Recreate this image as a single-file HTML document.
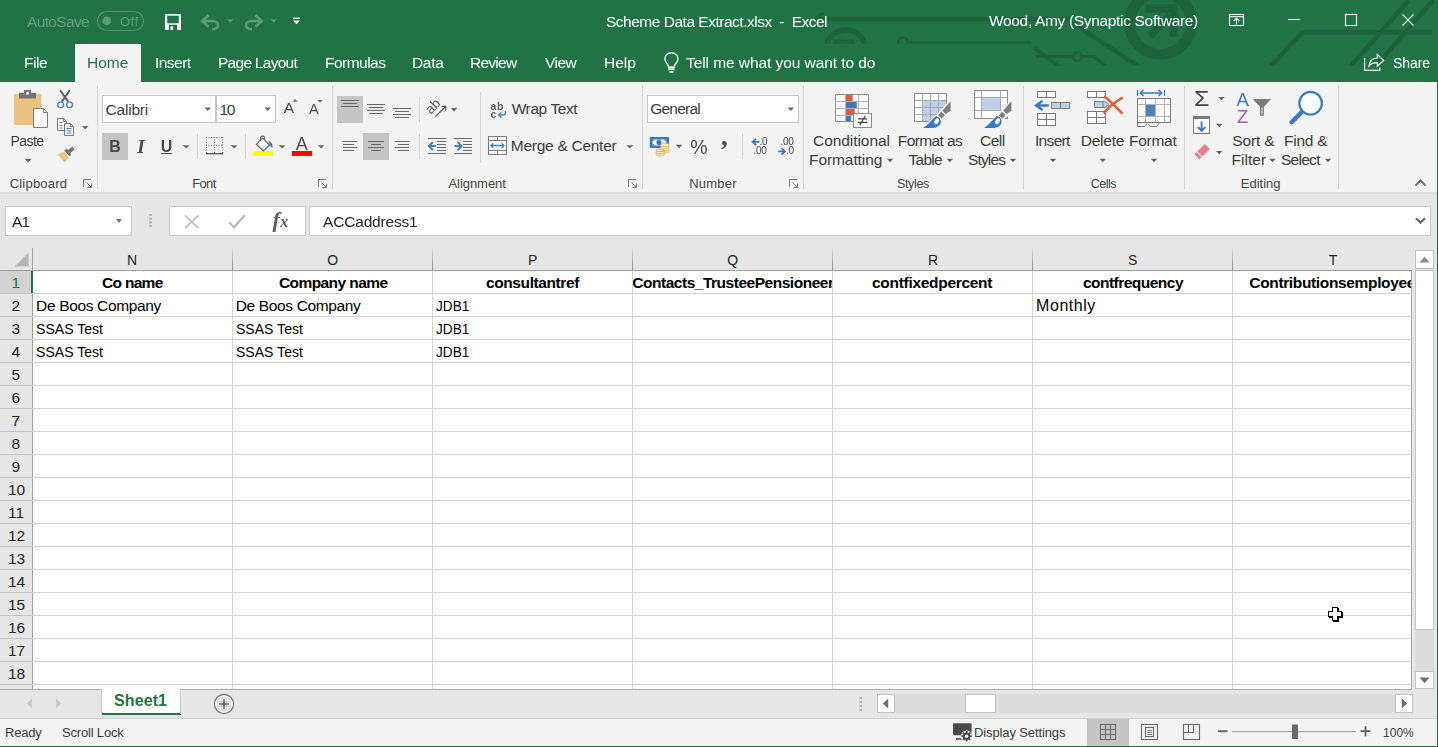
<!DOCTYPE html>
<html lang="en">
<head>
<meta charset="utf-8">
<title>Scheme Data Extract.xlsx - Excel</title>
<style>
html,body{margin:0;padding:0;}
body{width:1438px;height:747px;overflow:hidden;position:relative;background:#e6e6e6;font-family:"Liberation Sans",sans-serif;font-size:15px;color:#262626;}
#app{position:absolute;left:0;top:0;width:1438px;height:747px;overflow:hidden;}
.abs{position:absolute;}
.t{position:absolute;white-space:nowrap;line-height:20px;height:20px;font-size:15.5px;}
.w{color:#fff;will-change:transform;}
svg{position:absolute;overflow:visible;}
/* title + tabs */
#titlebar{left:0;top:0;width:1438px;height:82px;background:#217346;}
#hometab{left:75px;top:44px;width:66px;height:38px;background:#f3f3f3;}
/* ribbon */
#ribbon{left:0;top:82px;width:1438px;height:110px;background:#f3f3f3;}
#ribbonline{left:0;top:192px;width:1438px;height:2px;background:linear-gradient(#e2e2e2,#d6d6d6);}
.vsep{position:absolute;width:1px;background:#d5d5d5;}
.sel{position:absolute;background:#c6c6c6;}
.box{position:absolute;background:#fff;border:1px solid #c6c6c6;box-sizing:border-box;}
.dd{position:absolute;width:0;height:0;border-left:3.5px solid transparent;border-right:3.5px solid transparent;border-top:4px solid #5a5a5a;}
.lbl{color:#444;}
.rb{color:#3c3c3c;}

/* formula bar */
.fbox{position:absolute;background:#fff;border:1px solid #c8c8c8;box-sizing:border-box;top:206px;height:30px;}
/* grid */
#gridbg{left:32px;top:271px;width:1380px;height:418px;background:#fff;}
.hl{position:absolute;left:32px;width:1379px;height:1px;background:#d4d4d4;}
.vl{position:absolute;top:271px;width:1px;height:418px;background:#d4d4d4;}
.chs{position:absolute;top:248px;width:1px;height:22px;background:linear-gradient(#d6d6d6,#8f8f8f);}
.rhl{position:absolute;left:0;width:32px;height:1px;background:#c3c3c3;}
.c{font-size:15.5px;color:#000;}
.cb{font-size:15.5px;color:#000;font-weight:bold;}
.ch{font-size:14px;color:#262626;}
.rh{font-size:15.5px;color:#262626;}
.st{font-size:13px;color:#3b3b3b;}
</style>
</head>
<body>
<div id="app">

<!-- ===== TITLE BAR ===== -->
<div id="titlebar" class="abs"></div>
<div id="hometab" class="abs"></div>
<!-- ===== TITLE BAR PATTERN + ICONS ===== -->
<svg id="titleicons" style="left:0;top:0;" width="1438" height="82" viewBox="0 0 1438 82">
<defs><clipPath id="patclipL"><rect x="0" y="0" width="1031" height="43.800"/></clipPath><clipPath id="patclipR"><rect x="1031" y="0" width="407" height="66"/></clipPath></defs>
<g clip-path="url(#patclipL)" stroke="#1e633d" fill="none" stroke-linecap="butt">
  <path d="M817 19.200 H1040" stroke-width="4.400"/>
  <path d="M816 21 C816 16 820 13.500 824 14" stroke-width="2.500"/>
  <circle cx="845.700" cy="49.600" r="19.750" stroke-width="5.500"/>
  <path d="M833.600 42 H854.500" stroke-width="4.800"/>
  <circle cx="902.900" cy="42.200" r="4.700" stroke-width="2.600"/>
  <path d="M908 42.400 H1031" stroke-width="2.800"/>
</g>
<g clip-path="url(#patclipR)" stroke="#1e633d" fill="none" stroke-linecap="butt">
  <path d="M1020 19.200 H1067 L1139 67" stroke-width="4.400"/>
  <path d="M1034 48 L1060 67" stroke-width="4"/>
  <path d="M1036 56.500 H1073 M1082.500 56.500 H1094 L1107 67" stroke-width="3"/>
  <circle cx="1077.600" cy="56.700" r="4.300" stroke-width="2.600"/>
  <circle cx="1160.500" cy="23.300" r="31" stroke-width="11"/>
  <path d="M1150 36 L1170 15" stroke-width="8"/>
  <path d="M1146 8.400 H1174 V37" stroke-width="8.500"/>
  <path d="M1270 67 L1302.500 32.300 H1432" stroke-width="4.500"/>
  <path d="M1409 0 L1350 67" stroke-width="4.500"/>
  <path d="M1433.500 0 L1375 67" stroke-width="4.500"/>
</g>
<!-- autosave toggle -->
<rect x="97.500" y="11.500" width="46" height="19" rx="9.500" fill="none" stroke="#4f9370" stroke-width="1.200"/>
<circle cx="106.800" cy="20.900" r="4.300" fill="#5c9c79"/>
<!-- save -->
<path d="M165 14 H181 V30 H165 Z M167.200 15.800 V23.200 H178.800 V15.800 Z" fill="#f4f4f4" fill-rule="evenodd"/>
<rect x="169" y="24.800" width="8" height="5.200" fill="#217346"/>
<rect x="170.500" y="26.300" width="2.600" height="3.700" fill="#f4f4f4"/>
<!-- undo -->
<g stroke="#5c9c79" fill="none" stroke-width="2.700">
<path d="M208.500 15.200 L202.500 21 L208.500 26.800"/>
<path d="M203 21 H212.500 C220 21 220 29 212 29.200"/>
<!-- redo -->
<path d="M255.500 15.200 L261.500 21 L255.500 26.800"/>
<path d="M261 21 H251.500 C244 21 244 29 252 29.200"/>
</g>
<path d="M227 19.200 H233.400 L230.200 22.600 Z" fill="#5c9c79"/>
<path d="M270.500 19.200 H276.900 L273.700 22.600 Z" fill="#5c9c79"/>
<!-- customize QAT -->
<rect x="293.300" y="17.600" width="6.400" height="1.400" fill="#fff"/>
<path d="M293 20.600 H300 L296.500 24.200 Z" fill="#fff"/>
<!-- window controls -->
<g stroke="#fff" fill="none" stroke-width="1.100">
<rect x="1229.500" y="14.500" width="14" height="11"/>
<path d="M1229.500 16.700 H1243.500"/>
<path d="M1236.500 24.500 V18.500 M1233.700 21 L1236.500 18.300 L1239.300 21"/>
<path d="M1288 19.500 H1300"/>
<rect x="1345.500" y="14.500" width="11" height="11"/>
<path d="M1402.200 14.200 L1413.800 25.800 M1413.800 14.200 L1402.200 25.800"/>
</g>
<!-- tell me bulb -->
<g stroke="#f1f6f3" fill="none" stroke-width="1.400" transform="translate(0 0.7)">
<path d="M668.600 66.300 C668.600 63.500 664.800 61.800 664.800 58.300 C664.800 54.600 667.800 52 671.400 52 C675 52 678 54.600 678 58.300 C678 61.800 674.200 63.500 674.200 66.300 Z"/>
<path d="M668.600 68.500 H674.200 M669.400 71.300 H673.400"/>
</g>
<rect x="668.300" y="67" width="6.200" height="3.300" fill="#e8f0eb" opacity="0.850"/>
<!-- share -->
<g stroke="#fff" fill="none" stroke-width="1.200">
<path d="M1364.600 58 V70.400 H1379.800 V67.600"/>
<path d="M1369 66 C1369.500 61 1372.500 58.200 1377.300 58 V54.600 L1383.600 60.400 L1377.300 66.200 V62.700 C1373.500 62.600 1370.800 63.600 1369 66 Z"/>
</g>
</svg>

<span class="t" id="t_autosave" style="left:27.00px;top:12px;font-size:15.5px;color:#649d7d;letter-spacing:-0.65px;will-change:transform;">AutoSave</span>
<span class="t" id="t_off" style="left:119.5px;top:12px;font-size:13px;color:#5c9c79;letter-spacing:0.45px;will-change:transform;">Off</span>
<span class="t w" id="t_title" style="left:606.10px;top:12px;font-size:15.5px;letter-spacing:-0.49px;">Scheme Data Extract.xlsx&nbsp; -&nbsp; Excel</span>
<span class="t w" id="t_user" style="left:989.00px;top:11px;font-size:15.5px;letter-spacing:-0.33px;">Wood, Amy (Synaptic Software)</span>

<span class="t w" id="t_file" style="left:23.53px;top:53px;letter-spacing:-0.45px;">File</span>
<span class="t" id="t_home" style="left:86.70px;top:53px;color:#217346;letter-spacing:0.00px;will-change:transform;">Home</span>
<span class="t w" id="t_insert" style="left:154.70px;top:53px;letter-spacing:-0.54px;">Insert</span>
<span class="t w" id="t_pagelayout" style="left:217.70px;top:53px;letter-spacing:-0.73px;">Page Layout</span>
<span class="t w" id="t_formulas" style="left:324.70px;top:53px;letter-spacing:-0.52px;">Formulas</span>
<span class="t w" id="t_data" style="left:411.70px;top:53px;letter-spacing:-0.32px;">Data</span>
<span class="t w" id="t_review" style="left:470.48px;top:53px;letter-spacing:-0.73px;">Review</span>
<span class="t w" id="t_view" style="left:544.65px;top:53px;letter-spacing:-0.54px;">View</span>
<span class="t w" id="t_help" style="left:603.70px;top:53px;letter-spacing:0.03px;">Help</span>
<span class="t w" id="t_tellme" style="left:685.60px;top:53px;letter-spacing:-0.07px;">Tell me what you want to do</span>
<span class="t w" id="t_share" style="left:1392.96px;top:53px;font-size:14px;letter-spacing:-0.08px;">Share</span>

<!-- ===== RIBBON ===== -->
<div id="ribbon" class="abs"></div>
<div id="ribbonline" class="abs"></div>

<!-- group separators -->
<div class="vsep" style="left:97px;top:86px;height:103px;"></div>
<div class="vsep" style="left:332px;top:86px;height:103px;"></div>
<div class="vsep" style="left:642px;top:86px;height:103px;"></div>
<div class="vsep" style="left:803px;top:86px;height:103px;"></div>
<div class="vsep" style="left:1023px;top:86px;height:103px;"></div>
<div class="vsep" style="left:1184px;top:86px;height:103px;"></div>
<div class="vsep" style="left:1338px;top:86px;height:103px;"></div>
<!-- small separators -->
<div class="vsep" style="left:197px;top:134px;height:25px;"></div>
<div class="vsep" style="left:245px;top:134px;height:25px;"></div>
<div class="vsep" style="left:419px;top:97px;height:25px;"></div>
<div class="vsep" style="left:419px;top:134px;height:25px;"></div>
<div class="vsep" style="left:480px;top:92px;height:71px;"></div>
<div class="vsep" style="left:742px;top:134px;height:25px;"></div>

<!-- selected button backgrounds -->
<div class="sel" style="left:102px;top:133px;width:26px;height:27px;"></div>
<div class="sel" style="left:337px;top:96px;width:26px;height:27px;"></div>
<div class="sel" style="left:363px;top:133px;width:26px;height:27px;"></div>

<!-- combo boxes -->
<div class="box" style="left:102px;top:95px;width:114px;height:28px;"></div>
<div class="box" style="left:216px;top:95px;width:60px;height:28px;"></div>
<div class="box" style="left:647px;top:95px;width:152px;height:28px;"></div>
<span class="t rb" id="t_calibri" style="left:105.5px;top:100px;font-size:15.5px;letter-spacing:-0.2px;">Calibri</span>
<span class="t rb" id="t_10" style="left:219.4px;top:100px;font-size:15.5px;letter-spacing:-1.2px;">10</span>
<span class="t rb" id="t_general" style="top:99px;left:650.3px;letter-spacing:-0.8px;font-size:15.5px;">General</span>

<!-- group labels -->
<span class="t lbl" id="t_clipboard" style="left:9.68px;top:174px;font-size:13px;letter-spacing:0.21px;">Clipboard</span>
<span class="t lbl" id="t_font" style="left:192.14px;top:174px;font-size:13px;letter-spacing:-0.60px;">Font</span>
<span class="t lbl" id="t_alignment" style="left:448.50px;top:174px;font-size:13px;letter-spacing:-0.06px;">Alignment</span>
<span class="t lbl" id="t_number" style="left:689.14px;top:174px;font-size:13px;letter-spacing:0.24px;">Number</span>
<span class="t lbl" id="t_styles" style="left:897.00px;top:174px;font-size:12.5px;letter-spacing:-0.36px;">Styles</span>
<span class="t lbl" id="t_cells" style="left:1090.64px;top:174px;font-size:12.5px;letter-spacing:-0.48px;">Cells</span>
<span class="t lbl" id="t_editing" style="left:1240.78px;top:174px;font-size:13px;letter-spacing:0.00px;">Editing</span>

<!-- button labels -->
<span class="t rb" id="t_paste" style="left:10.60px;top:131px;font-size:14px;letter-spacing:-0.57px;">Paste</span>
<span class="t rb" id="t_wrap" style="left:511.68px;top:99px;letter-spacing:-0.40px;">Wrap Text</span>
<span class="t rb" id="t_merge" style="left:510.78px;top:136px;letter-spacing:-0.27px;">Merge &amp; Center</span>
<span class="t rb" id="t_cond" style="left:813.00px;top:131px;letter-spacing:-0.06px;">Conditional</span>
<span class="t rb" id="t_formatting" style="left:809.10px;top:150px;letter-spacing:-0.10px;">Formatting</span>
<span class="t rb" id="t_formatas" style="left:897.78px;top:131px;letter-spacing:-0.60px;">Format as</span>
<span class="t rb" id="t_table" style="left:908.50px;top:150px;letter-spacing:-0.72px;">Table</span>
<span class="t rb" id="t_cell" style="left:980.00px;top:131px;letter-spacing:-0.48px;">Cell</span>
<span class="t rb" id="t_styles2" style="left:967.96px;top:150px;letter-spacing:-0.84px;">Styles</span>
<span class="t rb" id="t_insertb" style="left:1034.96px;top:131px;letter-spacing:-0.66px;">Insert</span>
<span class="t rb" id="t_delete" style="left:1080.78px;top:131px;letter-spacing:-0.24px;">Delete</span>
<span class="t rb" id="t_format" style="left:1129.10px;top:131px;letter-spacing:-0.30px;">Format</span>
<span class="t rb" id="t_sort" style="left:1232.32px;top:131px;letter-spacing:-0.18px;">Sort &amp;</span>
<span class="t rb" id="t_filter" style="left:1231.42px;top:150px;letter-spacing:0.06px;">Filter</span>
<span class="t rb" id="t_find" style="left:1283.96px;top:131px;letter-spacing:-0.24px;">Find &amp;</span>
<span class="t rb" id="t_select" style="left:1280.96px;top:150px;letter-spacing:-0.72px;">Select</span>

<!-- ===== RIBBON ICONS (page coordinates) ===== -->
<svg id="ribbonicons" style="left:0;top:0;" width="1438" height="200" viewBox="0 0 1438 200">
<!-- dropdown arrows -->
<g fill="#666">
<path d="M24.800 158.800 H31.600 L28.200 162.400 Z"/>
<path d="M82 126 H88.400 L85.200 129.400 Z"/>
<path d="M204.500 107.600 H211 L207.750 111 Z"/>
<path d="M264.500 107.600 H271 L267.750 111 Z"/>
<path d="M182.800 145.200 H189.300 L186.050 148.600 Z"/>
<path d="M230.800 145.200 H237.300 L234.050 148.600 Z"/>
<path d="M278.800 145.200 H285.300 L282.050 148.600 Z"/>
<path d="M317.800 145.200 H324.300 L321.050 148.600 Z"/>
<path d="M450.800 108 H457.300 L454.050 111.400 Z"/>
<path d="M626.600 145.200 H633.100 L629.850 148.600 Z"/>
<path d="M787.600 107.600 H794.100 L790.850 111 Z"/>
<path d="M675.800 144.800 H682.300 L679.050 148.200 Z"/>
<path d="M886.800 158.800 H893.300 L890.050 162.200 Z"/>
<path d="M946.600 158.800 H953.100 L949.850 162.200 Z"/>
<path d="M1009.800 158.800 H1016.300 L1013.050 162.200 Z"/>
<path d="M1049.800 158.800 H1056.300 L1053.050 162.200 Z"/>
<path d="M1099.500 158.800 H1106 L1102.750 162.200 Z"/>
<path d="M1150.800 158.800 H1157.300 L1154.050 162.200 Z"/>
<path d="M1218.200 96.900 H1224.700 L1221.450 100.300 Z"/>
<path d="M1216 123.800 H1222.500 L1219.250 127.200 Z"/>
<path d="M1216 151.100 H1222.500 L1219.250 154.500 Z"/>
<path d="M1269.200 158.800 H1275.700 L1272.450 162.200 Z"/>
<path d="M1324.800 158.800 H1331.300 L1328.050 162.200 Z"/>
</g>
<!-- dialog launchers -->
<g stroke="#777" fill="none" stroke-width="1">
<path d="M83.500 187 V179.500 H91"/><path d="M86.500 182.500 L91.500 187.500 M91.500 183.500 V187.500 H87.500"/>
<path d="M318.500 187 V179.500 H326"/><path d="M321.500 182.500 L326.500 187.500 M326.500 183.500 V187.500 H322.500"/>
<path d="M628.500 187 V179.500 H636"/><path d="M631.500 182.500 L636.500 187.500 M636.500 183.500 V187.500 H632.500"/>
<path d="M789.500 187 V179.500 H797"/><path d="M792.500 182.500 L797.500 187.500 M797.500 183.500 V187.500 H793.500"/>
</g>
<!-- collapse ribbon caret -->
<path d="M1415.500 185.600 L1420.500 180.400 L1425.500 185.600" stroke="#6e6e6e" stroke-width="1.900" fill="none"/>

<!-- PASTE -->
<rect x="14" y="93.800" width="27.200" height="31.200" rx="1.500" fill="#eac282"/>
<path d="M19 92.800 H24 V90 H31 V92.800 H36 V98.400 H19 Z" fill="#737373"/>
<rect x="26.300" y="91.800" width="2.600" height="2.800" fill="#f3f3f3"/>
<path d="M33.500 108.500 H43.500 L47.500 112.500 V127.500 H33.500 Z" fill="#fff" stroke="#7a7a7a" stroke-width="1"/>
<path d="M43.500 108.500 V112.500 H47.500" fill="none" stroke="#7a7a7a" stroke-width="1"/>
<!-- CUT -->
<path d="M60.200 90.400 L68.200 101.600 M69.800 90.400 L61.800 101.600" stroke="#5e5e5e" stroke-width="1.900" fill="none"/>
<circle cx="60.700" cy="104.700" r="2.900" fill="none" stroke="#3e7fc4" stroke-width="1.300"/>
<circle cx="69.500" cy="104.700" r="2.900" fill="none" stroke="#3e7fc4" stroke-width="1.300"/>
<!-- COPY -->
<path d="M57.500 118.500 H63.500 L66.500 121.500 V130.500 H57.500 Z" fill="#fff" stroke="#7a7a7a"/>
<path d="M63.500 118.500 V121.500 H66.500" fill="none" stroke="#7a7a7a"/>
<path d="M59.500 122.500 H62.500 M59.500 125.500 H62.500 M59.500 128 H62.500" stroke="#3e7fc4" stroke-width="1"/>
<path d="M64.500 123.500 H70.500 L73.500 126.500 V135.500 H64.500 Z" fill="#fff" stroke="#7a7a7a"/>
<path d="M70.500 123.500 V126.500 H73.500" fill="none" stroke="#7a7a7a"/>
<path d="M66.500 128.500 H71.500 M66.500 130.800 H71.500 M66.500 133.100 H71.500" stroke="#3e7fc4" stroke-width="1"/>
<!-- FORMAT PAINTER -->
<path d="M57.500 154.400 L64.400 151.600 L69.200 157.600 L64.400 162.400 Z" fill="#eac282"/>
<path d="M64.200 150.600 L66.800 148.600 L71.200 154.600 L69.600 156.600 Z" fill="#737373"/>
<path d="M67.800 150.200 L72.400 146.800 L74.600 149.600 L70 153.200 Z" fill="#737373"/>

<!-- FONT GROUP: grow / shrink -->
<path d="M292.400 101.800 L295.100 99 L297.800 101.800 Z" fill="#3e7fc4"/>
<path d="M317.300 100 H322.900 L320.100 102.800 Z" fill="#3e7fc4"/>
<!-- underline bar for U -->
<rect x="160.800" y="153" width="11.200" height="1" fill="#4a4a4a"/>
<!-- borders icon -->
<g stroke="#6a6a6a" stroke-width="1" stroke-dasharray="1 1.500" fill="none">
<path d="M206 137.500 H223.200 M206.500 137 V153 M222.700 137 V153 M214.600 137 V153 M206 145.300 H223.200"/>
</g>
<path d="M205.800 153.700 H223.400" stroke="#5e5e5e" stroke-width="1.400"/>
<!-- fill color -->
<rect x="253" y="151" width="20.200" height="4.900" fill="#ffff00"/>
<path d="M256.300 144.300 L262.600 138 L269.600 145 L263.300 150.900 Z" fill="#fff" stroke="#5e5e5e" stroke-width="1.200"/>
<path d="M260.600 141.300 V137.800 C260.600 135.600 264.600 135.600 264.600 137.800 V140" fill="none" stroke="#5e5e5e" stroke-width="1.100"/>
<path d="M268.400 140.600 C271.400 141.600 273 144.600 272.500 148 C271 146.800 270 145.800 269.700 144.900 Z" fill="#3e7fc4"/>
<!-- font color -->
<rect x="291.900" y="151" width="20.200" height="4.900" fill="#ff0000"/>

<!-- ALIGNMENT -->
<g stroke="#666" stroke-width="1" fill="none" shape-rendering="crispEdges">
<path d="M341 100.500 H359 M343 103.500 H357 M341 106.500 H359"/>
<path d="M367 104.500 H385 M369 107.500 H383 M367 110.500 H385 M369 113.500 H383"/>
<path d="M393 108.500 H411 M395 111.500 H409 M393 114.500 H411 M395 117.500 H409"/>
<path d="M343 141.500 H357 M343 144.500 H354 M343 147.500 H357 M343 150.500 H354"/>
<path d="M368 141.500 H384 M371 144.500 H381 M368 147.500 H384 M371 150.500 H381"/>
<path d="M395 141.500 H409 M398 144.500 H409 M395 147.500 H409 M398 150.500 H409"/>
<!-- indent icons -->
<path d="M428 138.500 H446 M437 141.500 H446 M437 144.500 H446 M437 147.500 H446 M437 150.500 H446 M428 153.500 H446"/>
<path d="M454 138.500 H472 M463 141.500 H472 M463 144.500 H472 M463 147.500 H472 M463 150.500 H472 M454 153.500 H472"/>
</g>
<g stroke="#3e7fc4" stroke-width="2" fill="none">
<path d="M429 146.100 H436 M432.800 142.200 L428.900 146.100 L432.800 150"/>
<path d="M454.500 146.100 H461.500 M457.700 142.200 L461.600 146.100 L457.700 150"/>
</g>
<!-- orientation arrow -->
<path d="M435.300 116.600 L445.600 106.500 M441.600 106.400 H445.800 V110.500" stroke="#5e5e5e" stroke-width="1.300" fill="none"/>
<!-- wrap text arrow -->
<path d="M505.300 111.300 V113.300 C505.300 114.600 504.600 115 503.400 115 H499" stroke="#3e7fc4" stroke-width="1.300" fill="none"/>
<path d="M501.300 112.400 L498.600 115 L501.300 117.600" stroke="#3e7fc4" stroke-width="1.300" fill="none"/>
<!-- merge & center -->
<rect x="488.500" y="136.500" width="18" height="18" fill="#fff" stroke="#7a7a7a"/>
<path d="M488.500 140.500 H506.500 M488.500 150.500 H506.500 M497.500 136.500 V140.500 M497.500 150.500 V154.500" stroke="#7a7a7a" fill="none"/>
<path d="M491 145.500 H504 M493.300 143.200 L491 145.500 L493.300 147.800 M501.700 143.200 L504 145.500 L501.700 147.800" stroke="#3e7fc4" stroke-width="1.300" fill="none"/>
<!-- NUMBER: accounting -->
<rect x="649.800" y="137" width="19.200" height="11" rx="1" fill="#3b76bf"/>
<rect x="652.400" y="139.500" width="14" height="6" fill="#fff"/>
<ellipse cx="659" cy="142.500" rx="2.600" ry="2.800" fill="#3b76bf"/>
<path d="M652.400 139.500 H654.800 L652.400 141.900 Z M666.400 145.500 H664 L666.400 143.100 Z M652.400 145.500 V143.100 L654.800 145.500 Z M666.400 139.500 V141.900 L664 139.500 Z" fill="#3b76bf"/>
<g fill="#f3f3f3" stroke="#e3b565" stroke-width="1">
<rect x="660.900" y="143.700" width="8" height="9.200" rx="1.500"/>
<rect x="656.200" y="149.300" width="8" height="6.400" rx="1.500"/>
</g>
<path d="M661.300 146.500 H668.500 M661.300 148.700 H668.500 M661.300 150.900 H668.500 M656.600 151.600 H663.800 M656.600 153.600 H663.800" stroke="#e3b565" stroke-width="1.100" fill="none"/>
<!-- increase / decrease decimal arrows -->
<g stroke="#3b76bf" stroke-width="1.800" fill="none">
<path d="M752.800 141.800 H759.400 M756 138.600 L752.700 141.800 L756 145"/>
<path d="M778.200 151.400 H784.800 M781.600 148.200 L784.900 151.400 L781.600 154.600"/>
</g>
<!-- CONDITIONAL FORMATTING -->
<rect x="835.500" y="94.500" width="33" height="27" fill="#fff" stroke="#8a8a8a"/>
<path d="M845.500 94.500 V121.500 M858.500 94.500 V121.500 M835.500 101.500 H868.500 M835.500 108.500 H868.500 M835.500 115.500 H868.500" stroke="#b4b4b4" fill="none"/>
<rect x="846" y="95" width="6.700" height="6" fill="#d9603b"/>
<rect x="846" y="102" width="10.800" height="6" fill="#3b78c4"/>
<rect x="846" y="109" width="8.800" height="6" fill="#d9603b"/>
<rect x="846" y="116" width="5" height="5" fill="#3b78c4"/>
<rect x="853.500" y="113.500" width="18" height="14" fill="#fff" stroke="#8a8a8a"/>
<path d="M858 118.800 H867 M858 122.400 H867 M865.200 115.800 L859.800 125.400" stroke="#444" stroke-width="1.200" fill="none"/>
<!-- FORMAT AS TABLE -->
<rect x="914.500" y="93.500" width="32" height="28" fill="#fff" stroke="#8a8a8a"/>
<rect x="922.500" y="100.500" width="24" height="21" fill="#bdd0e9"/>
<path d="M922.500 93.500 V121.500 M930.500 93.500 V121.500 M938.500 93.500 V121.500 M914.500 100.500 H946.500 M914.500 107.500 H946.500 M914.500 114.500 H946.500" stroke="#a8a8a8" fill="none"/>
<rect x="914.500" y="93.500" width="32" height="28" fill="none" stroke="#8a8a8a"/>
<path d="M948 104 V123 H929.500 Z" fill="#f3f3f3"/>
<g id="brushA">
<path d="M951.100 100.200 L951.100 110.700 L941.600 119.600 L937.200 115.400 Z" fill="none" stroke="#f3f3f3" stroke-width="2"/>
<path d="M950.600 101.200 L950.600 110.400 L945.900 113.900 L942.300 110.700 Z" fill="#7f7f7f"/>
<path d="M941.200 111.800 L945 115.100 L941.500 118.600 L938 115.400 Z" fill="#7f7f7f"/>
<path d="M923.200 127.900 C928.500 124.500 931.500 120.300 935.600 116.300 C938.800 116.300 940.900 118.800 940.900 121.800 C940.300 125.800 936.800 127.900 933 127.900 Z" fill="#3b78c4" stroke="#f3f3f3" stroke-width="2.200" paint-order="stroke"/>
<ellipse cx="936.700" cy="121.300" rx="2.100" ry="3.100" transform="rotate(30 936.700 121.300)" fill="#fff"/>
</g>
<!-- CELL STYLES -->
<rect x="974.500" y="90.500" width="33" height="28" fill="#fff" stroke="#8a8a8a"/>
<rect x="982" y="98" width="18" height="12" fill="#bdd0e9"/>
<path d="M981.500 90.500 V118.500 M1000.500 90.500 V118.500 M974.500 97.500 H1007.500 M974.500 110.500 H1007.500" stroke="#a8a8a8" fill="none"/>
<rect x="974.500" y="90.500" width="33" height="28" fill="none" stroke="#8a8a8a"/>
<g id="brushB" transform="translate(60.800 0)">
<path d="M951.100 100.200 L951.100 110.700 L941.600 119.600 L937.200 115.400 Z" fill="none" stroke="#f3f3f3" stroke-width="2"/>
<path d="M950.600 101.200 L950.600 110.400 L945.900 113.900 L942.300 110.700 Z" fill="#7f7f7f"/>
<path d="M941.200 111.800 L945 115.100 L941.500 118.600 L938 115.400 Z" fill="#7f7f7f"/>
<path d="M923.200 127.900 C928.500 124.500 931.500 120.300 935.600 116.300 C938.800 116.300 940.900 118.800 940.900 121.800 C940.300 125.800 936.800 127.900 933 127.900 Z" fill="#3b78c4" stroke="#f3f3f3" stroke-width="2.200" paint-order="stroke"/>
<ellipse cx="936.700" cy="121.300" rx="2.100" ry="3.100" transform="rotate(30 936.700 121.300)" fill="#fff"/>
</g>
<!-- INSERT -->
<g fill="#fff" stroke="#7a7a7a">
<rect x="1037.500" y="91.500" width="18" height="6"/>
<rect x="1037.500" y="113.500" width="18" height="12"/>
</g>
<path d="M1046.500 91.500 V97.500 M1046.500 113.500 V125.500 M1037.500 119.500 H1055.500" stroke="#7a7a7a" fill="none"/>
<rect x="1051.500" y="102.500" width="18" height="6" fill="#bdd0e9" stroke="#7a7a7a"/>
<path d="M1060.500 102.500 V108.500" stroke="#7a7a7a"/>
<path d="M1034 105.500 L1041.800 100 L1043.200 101.800 L1040 104.200 H1048.800 V106.800 H1040 L1043.200 109.200 L1041.800 111 Z" fill="#3b78c4"/>
<!-- DELETE -->
<g fill="#fff" stroke="#7a7a7a">
<rect x="1087.500" y="91.500" width="18" height="6"/>
<rect x="1087.500" y="111.500" width="18" height="12"/>
</g>
<path d="M1096.500 91.500 V97.500 M1096.500 111.500 V123.500 M1087.500 117.500 H1105.500" stroke="#7a7a7a" fill="none"/>
<path d="M1094.500 101.500 H1105 L1109 104.600 L1105 107.500 H1094.500 Z" fill="#bdd0e9" stroke="#7a7a7a"/>
<path d="M1103 101.500 V107.500" stroke="#7a7a7a"/>
<path d="M1105 97 C1110 101 1116 107 1121.800 112.800 M1121.800 98.200 C1115 102 1109 107 1104.400 112.600" stroke="#d9603b" stroke-width="2.600" fill="none" stroke-linecap="round"/>
<!-- FORMAT -->
<path d="M1137.500 90 V96 M1164.500 90 V96" stroke="#3b78c4" stroke-width="1.200"/>
<path d="M1140.500 93 H1161.500 M1143.500 90 L1140.300 93 L1143.500 96 M1158.500 90 L1161.700 93 L1158.500 96" stroke="#3b78c4" stroke-width="1.500" fill="none"/>
<rect x="1137.500" y="98.500" width="33" height="24" fill="#fff" stroke="#7a7a7a"/>
<path d="M1145.500 98.500 V122.500 M1155.500 98.500 V122.500 M1164.500 98.500 V122.500 M1137.500 104.500 H1170.500 M1137.500 116.500 H1170.500" stroke="#b4b4b4" fill="none"/>
<rect x="1146" y="105" width="9" height="11" fill="#4a82bd"/>
<rect x="1137.500" y="98.500" width="33" height="24" fill="none" stroke="#7a7a7a"/>
<path d="M1137.500 122.500 V126.500 H1145 L1147 124 M1148.500 124 L1150 126.500 H1157 L1159.500 122.500" stroke="#7a7a7a" fill="none"/>
<!-- EDITING: fill down -->
<rect x="1193.500" y="116.500" width="16" height="17" fill="#fff" stroke="#7a7a7a"/>
<rect x="1193" y="116" width="17" height="3" fill="#7a7a7a"/>
<path d="M1201.600 121.500 V130.500 M1197.800 127 L1201.600 130.800 L1205.400 127" stroke="#3b78c4" stroke-width="1.900" fill="none"/>
<!-- eraser -->
<path d="M1194.300 153.900 L1204.900 144.100 L1209.900 148.900 L1199.300 159.600 Z" fill="#e8818f"/>
<path d="M1196.800 151.600 L1201.800 156.900" stroke="#f3f3f3" stroke-width="1.100"/>
<!-- funnel -->
<path d="M1252.700 99 H1271.100 L1263.900 106.800 V115.800 H1260 V106.800 Z" fill="#7a7a7a"/>
<path d="M1262 107.500 V114.600" stroke="#f3f3f3" stroke-width="1"/>
<!-- magnifier -->
<path d="M1301.700 112.100 L1291.600 122.200" stroke="#3b78c4" stroke-width="4.400" stroke-linecap="round"/>
<circle cx="1310.600" cy="103.200" r="11.300" fill="#fff" stroke="#3b78c4" stroke-width="2.200"/>

</svg>
<!-- icon glyph text -->
<span class="t" id="i_B" style="left:109.300px;top:137px;font-size:16px;font-weight:bold;color:#4a4a4a;">B</span>
<span class="t" id="i_I" style="left:137.200px;top:136.500px;font-size:19px;font-weight:bold;font-style:italic;font-family:'Liberation Serif',serif;color:#4a4a4a;">I</span>
<span class="t" id="i_U" style="left:160.800px;top:137px;font-size:16px;font-weight:bold;color:#4a4a4a;">U</span>
<span class="t" id="i_Abig" style="left:283.800px;top:98px;font-size:15.500px;color:#4a4a4a;">A</span>
<span class="t" id="i_Asmall" style="left:309px;top:98.500px;font-size:14.500px;color:#4a4a4a;">A</span>
<span class="t" id="i_Acolor" style="left:295.800px;top:133.500px;font-size:18px;color:#4a4a4a;">A</span>
<span class="t" id="i_ab" style="left:434.8px;top:99px;font-size:13.5px;color:#555;transform:rotate(-45deg);transform-origin:0 20px;">ab</span>
<span class="t" id="i_wrapab" style="left:490.500px;top:95.500px;letter-spacing:0.7px;font-size:10.500px;font-weight:bold;color:#5e5e5e;">ab</span>
<span class="t" id="i_pct" style="left:690.300px;top:136.500px;font-size:19.500px;color:#4a4a4a;">%</span>
<span class="t" id="i_comma" style="left:721px;top:126px;font-size:27px;font-weight:bold;font-family:'Liberation Serif',serif;color:#4a4a4a;">,</span>
<span class="t" id="i_dec1a" style="left:759.500px;top:131.500px;font-size:10px;color:#4a4a4a;letter-spacing:-0.300px;">.0</span>
<span class="t" id="i_dec1b" style="left:753.500px;top:140.500px;font-size:10px;color:#4a4a4a;letter-spacing:-0.300px;">.00</span>
<span class="t" id="i_dec2a" style="left:780.500px;top:131.500px;font-size:10px;color:#4a4a4a;letter-spacing:-0.300px;">.00</span>
<span class="t" id="i_dec2b" style="left:786px;top:140.500px;font-size:10px;color:#4a4a4a;letter-spacing:-0.300px;">.0</span>
<span class="t" id="i_sigma" style="left:1193.600px;top:85.500px;font-size:22px;line-height:26px;height:26px;color:#444;transform:scaleX(1.130);transform-origin:0 0;">&Sigma;</span>
<span class="t" id="i_sortA" style="left:1236.600px;top:88px;font-size:18.500px;line-height:24px;height:24px;color:#3b78c4;">A</span>
<span class="t" id="i_sortZ" style="left:1237px;top:105px;font-size:18.500px;line-height:24px;height:24px;color:#a259c2;">Z</span>
<span class="t" id="i_wrapc" style="left:490.500px;top:103.500px;font-size:10.500px;font-weight:bold;color:#5e5e5e;">c</span>


<!-- ===== FORMULA BAR ===== -->
<div class="fbox" style="left:5px;width:127px;"></div>
<div class="fbox" style="left:169px;width:137px;"></div>
<div class="fbox" style="left:309px;width:1122px;"></div>
<span class="t" id="t_a1" style="left:12.00px;top:212px;color:#262626;letter-spacing:-0.90px;">A1</span>
<div class="dd" style="left:116px;top:219px;border-top-color:#777;"></div>
<svg style="left:148px;top:213px;" width="6" height="14" viewBox="0 0 6 14"><g fill="#b4b4b4"><rect x="1" y="1" width="3" height="2"/><rect x="1" y="4.7" width="3" height="2"/><rect x="1" y="8.4" width="3" height="2"/><rect x="1" y="12" width="3" height="2"/></g></svg>
<svg style="left:184px;top:214px;" width="16" height="15" viewBox="0 0 16 15"><path d="M1 1.5 L14.5 14 M14.5 1.5 L1 14" stroke="#b8b8b8" stroke-width="1.7" fill="none"/></svg>
<svg style="left:228px;top:214px;" width="18" height="15" viewBox="0 0 18 15"><path d="M1.2 8.2 L6 13.3 L16.8 1.2" stroke="#b8b8b8" stroke-width="2.2" fill="none"/></svg>
<span class="t" id="t_fx" style="left:272.5px;top:208px;font-family:'Liberation Serif',serif;font-style:italic;font-size:22px;line-height:24px;height:24px;color:#5e5e5e;font-weight:bold;letter-spacing:0.5px;">f<span style="font-size:16px;">x</span></span>
<span class="t c" id="t_formula" style="left:323.00px;top:212px;color:#262626;letter-spacing:-0.18px;">ACCaddress1</span>
<svg style="left:1415px;top:217px;" width="11" height="8" viewBox="0 0 11 8"><path d="M1 1.2 L5.5 5.8 L10 1.2" stroke="#6a6a6a" stroke-width="2.2" fill="none"/></svg>


<!-- ===== GRID ===== -->
<div id="gridbg" class="abs"></div>
<svg style="left:14.3px;top:252px;" width="15" height="15" viewBox="0 0 15 15"><path d="M14.5 0.5 L14.5 14.5 L0.5 14.5 Z" fill="#b7b7b7"/></svg>
<div class="abs" style="left:0;top:270px;width:1412px;height:1px;background:#9f9f9f;"></div>
<div class="abs" style="left:32px;top:248px;width:1px;height:441px;background:#9f9f9f;"></div>
<div class="abs" style="left:1411px;top:271px;width:1px;height:418px;background:#a6a6a6;"></div>
<div class="abs" style="left:0;top:271px;width:31px;height:22px;background:#d2d2d2;"></div>
<div class="abs" style="left:31px;top:271px;width:2px;height:23px;background:#217346;"></div>
<div class="vl" style="left:232px;"></div>
<div class="chs" style="left:232px;"></div>
<div class="vl" style="left:432px;"></div>
<div class="chs" style="left:432px;"></div>
<div class="vl" style="left:632px;"></div>
<div class="chs" style="left:632px;"></div>
<div class="vl" style="left:832px;"></div>
<div class="chs" style="left:832px;"></div>
<div class="vl" style="left:1032px;"></div>
<div class="chs" style="left:1032px;"></div>
<div class="vl" style="left:1232px;"></div>
<div class="chs" style="left:1232px;"></div>
<div class="hl" style="top:293px;"></div>
<div class="rhl" style="top:293px;"></div>
<div class="hl" style="top:316px;"></div>
<div class="rhl" style="top:316px;"></div>
<div class="hl" style="top:339px;"></div>
<div class="rhl" style="top:339px;"></div>
<div class="hl" style="top:362px;"></div>
<div class="rhl" style="top:362px;"></div>
<div class="hl" style="top:385px;"></div>
<div class="rhl" style="top:385px;"></div>
<div class="hl" style="top:408px;"></div>
<div class="rhl" style="top:408px;"></div>
<div class="hl" style="top:431px;"></div>
<div class="rhl" style="top:431px;"></div>
<div class="hl" style="top:454px;"></div>
<div class="rhl" style="top:454px;"></div>
<div class="hl" style="top:477px;"></div>
<div class="rhl" style="top:477px;"></div>
<div class="hl" style="top:500px;"></div>
<div class="rhl" style="top:500px;"></div>
<div class="hl" style="top:523px;"></div>
<div class="rhl" style="top:523px;"></div>
<div class="hl" style="top:546px;"></div>
<div class="rhl" style="top:546px;"></div>
<div class="hl" style="top:569px;"></div>
<div class="rhl" style="top:569px;"></div>
<div class="hl" style="top:592px;"></div>
<div class="rhl" style="top:592px;"></div>
<div class="hl" style="top:615px;"></div>
<div class="rhl" style="top:615px;"></div>
<div class="hl" style="top:638px;"></div>
<div class="rhl" style="top:638px;"></div>
<div class="hl" style="top:661px;"></div>
<div class="rhl" style="top:661px;"></div>
<div class="hl" style="top:684px;"></div>
<div class="rhl" style="top:684px;"></div>
<span class="t ch" id="t_colN" style="left:127.10px;top:250px;">N</span>
<span class="t ch" id="t_colO" style="left:327.21px;top:250px;">O</span>
<span class="t ch" id="t_colP" style="left:528.05px;top:250px;">P</span>
<span class="t ch" id="t_colQ" style="left:727.21px;top:250px;">Q</span>
<span class="t ch" id="t_colR" style="left:928.05px;top:250px;">R</span>
<span class="t ch" id="t_colS" style="left:1128.10px;top:250px;">S</span>
<span class="t ch" id="t_colT" style="left:1328.74px;top:250px;">T</span>
<span class="t rh" id="t_row1" style="left:11.5px;top:273px;color:#217346;">1</span>
<span class="t rh" id="t_row2" style="left:11.5px;top:296px;">2</span>
<span class="t rh" id="t_row3" style="left:11.5px;top:319px;">3</span>
<span class="t rh" id="t_row4" style="left:11.5px;top:342px;">4</span>
<span class="t rh" id="t_row5" style="left:11.5px;top:365px;">5</span>
<span class="t rh" id="t_row6" style="left:11.5px;top:388px;">6</span>
<span class="t rh" id="t_row7" style="left:11.5px;top:411px;">7</span>
<span class="t rh" id="t_row8" style="left:11.5px;top:434px;">8</span>
<span class="t rh" id="t_row9" style="left:11.5px;top:457px;">9</span>
<span class="t rh" id="t_row10" style="left:8.0px;top:480px;">10</span>
<span class="t rh" id="t_row11" style="left:8.0px;top:503px;">11</span>
<span class="t rh" id="t_row12" style="left:8.0px;top:526px;">12</span>
<span class="t rh" id="t_row13" style="left:8.0px;top:549px;">13</span>
<span class="t rh" id="t_row14" style="left:8.0px;top:572px;">14</span>
<span class="t rh" id="t_row15" style="left:8.0px;top:595px;">15</span>
<span class="t rh" id="t_row16" style="left:8.0px;top:618px;">16</span>
<span class="t rh" id="t_row17" style="left:8.0px;top:641px;">17</span>
<span class="t rh" id="t_row18" style="left:8.0px;top:664px;">18</span>
<span class="t cb" id="t_n1" style="left:102.00px;top:273px;letter-spacing:-0.69px;">Co name</span>
<span class="t cb" id="t_o1" style="left:278.98px;top:273px;letter-spacing:-0.58px;">Company name</span>
<span class="t cb" id="t_p1" style="left:486.04px;top:273px;letter-spacing:-0.41px;">consultantref</span>
<div class="abs" style="left:633px;top:271px;width:199px;height:22px;overflow:hidden;"><span class="t cb" id="t_q1" style="left:-0.7px;top:2px;letter-spacing:-0.48px;">Contacts_TrusteePensioneer</span></div>
<span class="t cb" id="t_r1" style="left:872.04px;top:273px;letter-spacing:-0.30px;">contfixedpercent</span>
<span class="t cb" id="t_s1" style="left:1082.98px;top:273px;letter-spacing:-0.52px;">contfrequency</span>
<div class="abs" style="left:1233px;top:271px;width:178px;height:22px;overflow:hidden;"><span class="t cb" id="t_t1" style="left:16.3px;top:2px;letter-spacing:-0.35px;">Contributionsemployee</span></div>
<span class="t c" id="t_n2" style="left:36.08px;top:296px;letter-spacing:-0.35px;">De Boos Company</span>
<span class="t c" id="t_n3" style="top:319px;left:36.2px;transform:scaleX(0.908);transform-origin:0 0;">SSAS Test</span>
<span class="t c" id="t_n4" style="top:342px;left:36.2px;transform:scaleX(0.908);transform-origin:0 0;">SSAS Test</span>
<span class="t c" id="t_o2" style="left:235.68px;top:296px;letter-spacing:-0.35px;">De Boos Company</span>
<span class="t c" id="t_o3" style="top:319px;left:235.8px;transform:scaleX(0.906);transform-origin:0 0;">SSAS Test</span>
<span class="t c" id="t_o4" style="top:342px;left:235.8px;transform:scaleX(0.906);transform-origin:0 0;">SSAS Test</span>
<span class="t c" id="t_p2" style="top:296px;left:435.9px;transform:scaleX(0.878);transform-origin:0 0;">JDB1</span>
<span class="t c" id="t_p3" style="top:319px;left:435.9px;transform:scaleX(0.878);transform-origin:0 0;">JDB1</span>
<span class="t c" id="t_p4" style="top:342px;left:435.9px;transform:scaleX(0.878);transform-origin:0 0;">JDB1</span>
<span class="t c" id="t_s2" style="left:1036.10px;top:296px;font-size:16px;letter-spacing:0.54px;">Monthly</span>


<!-- ===== SCROLLBARS / SHEET TABS / STATUS ===== -->
<!-- vertical scrollbar -->
<div class="abs" style="left:1412px;top:248px;width:25px;height:441px;background:#e6e6e6;"></div>
<div class="abs" style="left:1415px;top:269px;width:19px;height:402px;background:#dcdcdc;"></div>
<div class="abs" style="left:1415px;top:250px;width:19px;height:19px;background:#fff;border:1px solid #c0c0c0;box-sizing:border-box;"></div>
<div class="abs" style="left:1415px;top:270px;width:19px;height:360px;background:#fff;border:1px solid #c0c0c0;box-sizing:border-box;"></div>
<div class="abs" style="left:1415px;top:671px;width:19px;height:18px;background:#fff;border:1px solid #c0c0c0;box-sizing:border-box;"></div>
<svg style="left:1419px;top:256px;" width="11" height="7" viewBox="0 0 11 7"><path d="M0.5 6.5 L5.5 0.8 L10.5 6.5 Z" fill="#8a8a8a"/></svg>
<svg style="left:1419px;top:677px;" width="11" height="7" viewBox="0 0 11 7"><path d="M0.5 0.5 L5.5 6.2 L10.5 0.5 Z" fill="#6e6e6e"/></svg>
<!-- tab bar -->
<div class="abs" style="left:0;top:689px;width:1437px;height:30px;background:#e6e6e6;"></div>
<div class="abs" style="left:0;top:689px;width:1412px;height:1px;background:#ababab;"></div>
<div class="abs" style="left:102px;top:689px;width:79px;height:24px;background:#fff;"></div>
<div class="abs" style="left:102px;top:713px;width:79px;height:2px;background:#217346;"></div>
<div class="abs" style="left:101px;top:689px;width:1px;height:25px;background:#c8c8c8;"></div>
<div class="abs" style="left:180px;top:689px;width:1px;height:25px;background:#c8c8c8;"></div>
<span class="t" id="t_sheet1" style="left:114.04px;top:691px;font-size:16px;font-weight:bold;color:#217346;letter-spacing:0.09px;">Sheet1</span>
<svg style="left:26px;top:698px;" width="7" height="11" viewBox="0 0 7 11"><path d="M6 0.5 L6 10.5 L0.8 5.5 Z" fill="#c6c6c6"/></svg>
<svg style="left:55px;top:698px;" width="7" height="11" viewBox="0 0 7 11"><path d="M1 0.5 L1 10.5 L6.2 5.5 Z" fill="#c6c6c6"/></svg>
<svg style="left:213px;top:693px;" width="22" height="22" viewBox="0 0 22 22"><circle cx="11" cy="11" r="9.6" fill="none" stroke="#7a7a7a" stroke-width="1.2"/><path d="M11 6.2 V15.8 M6.2 11 H15.8" stroke="#6a6a6a" stroke-width="1.6"/></svg>
<!-- horizontal scrollbar -->
<svg style="left:859px;top:697px;" width="4" height="14" viewBox="0 0 4 14"><g fill="#b4b4b4"><rect x="0.5" y="0" width="2.5" height="2"/><rect x="0.5" y="4" width="2.5" height="2"/><rect x="0.5" y="8" width="2.5" height="2"/><rect x="0.5" y="12" width="2.5" height="2"/></g></svg>
<div class="abs" style="left:877px;top:694px;width:536px;height:19px;background:#dcdcdc;"></div>
<div class="abs" style="left:877px;top:694px;width:18px;height:19px;background:#fff;border:1px solid #c0c0c0;box-sizing:border-box;"></div>
<div class="abs" style="left:1395px;top:694px;width:18px;height:19px;background:#fff;border:1px solid #c0c0c0;box-sizing:border-box;"></div>
<div class="abs" style="left:965px;top:694px;width:31px;height:19px;background:#fff;border:1px solid #c0c0c0;box-sizing:border-box;"></div>
<svg style="left:882px;top:698px;" width="7" height="11" viewBox="0 0 7 11"><path d="M6.2 0.5 L6.2 10.5 L0.8 5.5 Z" fill="#6e6e6e"/></svg>
<svg style="left:1401px;top:698px;" width="7" height="11" viewBox="0 0 7 11"><path d="M0.8 0.5 L0.8 10.5 L6.2 5.5 Z" fill="#6e6e6e"/></svg>
<!-- status bar -->
<div class="abs" style="left:0;top:718px;width:1437px;height:28px;background:#f3f3f3;"></div>
<div class="abs" style="left:0;top:718px;width:1437px;height:1px;background:#cfcfcf;"></div>
<div class="abs" style="left:1087px;top:719px;width:42px;height:27px;background:#c6c6c6;"></div>
<span class="t st" id="t_ready" style="left:5.10px;top:723px;letter-spacing:-0.23px;">Ready</span>
<span class="t st" id="t_scroll" style="left:62.00px;top:723px;letter-spacing:-0.18px;">Scroll Lock</span>
<span class="t st" id="t_display" style="left:974.04px;top:723px;letter-spacing:-0.12px;">Display Settings</span>
<span class="t st" id="t_100" style="left:1383.05px;top:723px;font-size:12px;letter-spacing:0.00px;">100%</span>
<svg id="statusicons" style="left:0;top:700px;" width="1438" height="47" viewBox="0 700 1438 47">
<!-- display settings icon -->
<rect x="953" y="723.200" width="18.600" height="12" rx="1" fill="#4a4a4a"/>
<path d="M956 739 H961.500" stroke="#4a4a4a" stroke-width="1.600"/>
<circle cx="966.600" cy="736.200" r="5.600" fill="#f3f3f3"/>
<g fill="#4a4a4a">
<circle cx="966.600" cy="736.200" r="3.700"/>
<rect x="965.700" y="731" width="1.800" height="10.400"/>
<rect x="961.400" y="735.300" width="10.400" height="1.800"/>
<rect x="965.700" y="731" width="1.800" height="10.400" transform="rotate(45 966.600 736.200)"/>
<rect x="965.700" y="731" width="1.800" height="10.400" transform="rotate(-45 966.600 736.200)"/>
</g>
<circle cx="966.600" cy="736.200" r="1.700" fill="#f3f3f3"/>
<!-- normal view -->
<g stroke="#6a6a6a" fill="none" stroke-width="1.100">
<rect x="1100.500" y="724.500" width="15" height="15"/>
<path d="M1105.500 724.500 V739.500 M1110.500 724.500 V739.500 M1100.500 729.500 H1115.500 M1100.500 734.500 H1115.500"/>
<!-- page layout -->
<rect x="1141.500" y="724.500" width="16" height="15"/>
<rect x="1145.500" y="727.500" width="8" height="9"/>
<path d="M1147.500 730.500 H1152 M1147.500 732.500 H1152 M1147.500 734.500 H1152" stroke-width="0.900"/>
<!-- page break -->
<rect x="1183.500" y="724.500" width="16" height="15"/>
<path d="M1183.500 732.500 H1193.500 V724.500 M1188.500 724.500 V732.500"/>
</g>
<!-- zoom slider -->
<rect x="1218" y="730.200" width="9.500" height="2" fill="#6a6a6a"/>
<rect x="1232" y="731.200" width="124" height="1" fill="#9a9a9a"/>
<rect x="1292" y="724.500" width="6" height="14.500" fill="#6a6a6a"/>
<path d="M1360.500 731.200 H1370.500 M1365.500 726.200 V736.200" stroke="#5e5e5e" stroke-width="1.800"/>
</svg>
<!-- mouse cursor (cell select cross) -->
<svg id="cursor" style="left:1327px;top:606px;" width="18" height="18" viewBox="1327 606 18 18" shape-rendering="crispEdges">
<path d="M1333 608 H1339 V612 H1343 V618 H1339 V622 H1333 V618 H1329 V612 H1333 Z" fill="#000"/>
<path d="M1332 607 H1338 V611 H1342 V617 H1338 V621 H1332 V617 H1328 V611 H1332 Z" fill="#000"/>
<path d="M1333 608 H1337 V612 H1341 V616 H1337 V620 H1333 V616 H1329 V612 H1333 Z" fill="#fff"/>
</svg>

<!-- window borders -->
<div class="abs" style="left:0;top:746px;width:1438px;height:1px;background:#1e6e42;"></div>
<div class="abs" style="left:1437px;top:0;width:1px;height:747px;background:#1e6e42;"></div>


</div>
</body>
</html>
